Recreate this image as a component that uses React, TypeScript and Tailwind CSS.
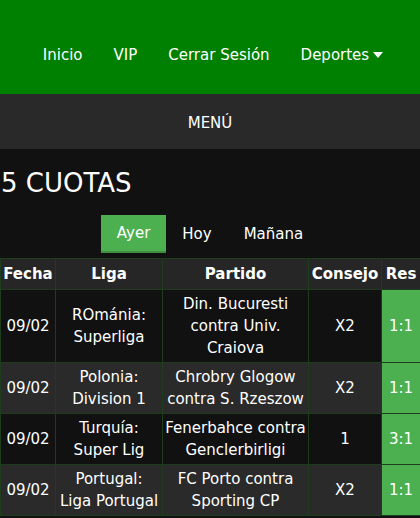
import React, { FC } from "react";

const rows = [
  { fecha: "09/02", liga: ["ROmánia:", "Superliga"], partido: ["Din. Bucuresti", "contra Univ.", "Craiova"], consejo: "X2", res: "1:1" },
  { fecha: "09/02", liga: ["Polonia:", "Division 1"], partido: ["Chrobry Glogow", "contra S. Rzeszow"], consejo: "X2", res: "1:1" },
  { fecha: "09/02", liga: ["Turquía:", "Super Lig"], partido: ["Fenerbahce contra", "Genclerbirligi"], consejo: "1", res: "3:1" },
  { fecha: "09/02", liga: ["Portugal:", "Liga Portugal"], partido: ["FC Porto contra", "Sporting CP"], consejo: "X2", res: "1:1" },
];

const Lines: FC<{ lines: string[] }> = ({ lines }) => (
  <>
    {lines.map((l, i) => (
      <span key={i} className="block whitespace-nowrap">
        {l}
      </span>
    ))}
  </>
);

const App: FC = () => {
  return (
    <div className="min-h-[518px] bg-[#111111] text-white font-['DejaVu_Sans',sans-serif] overflow-hidden">
      <nav className="h-[94px] bg-[#008000] flex items-center justify-center gap-[31px] text-[15px] pt-[16px] pl-[6px]">
        <span>Inicio</span>
        <span>VIP</span>
        <span>Cerrar Sesión</span>
        <span className="flex items-center gap-[4px]">
          Deportes
          <svg width="10" height="6" viewBox="0 0 10 6">
            <path d="M0 0h10L5 6z" fill="white" />
          </svg>
        </span>
      </nav>
      <div className="h-[55px] bg-[#292929] flex items-center justify-center text-[15px] pt-[3px]">MENÚ</div>
      <h1 className="text-[26px] leading-[34px] pl-[1px] pt-[17px]">5 CUOTAS</h1>
      <div className="flex justify-center items-center mt-[15px] text-[15px]">
        <span className="bg-[#4caf50] px-[16px] h-[38px] flex items-center border-b-2 border-[#3f8f42]">Ayer</span>
        <span className="px-[16px]">Hoy</span>
        <span className="px-[16px]">Mañana</span>
      </div>
      <table className="mt-[5px] w-[420px] table-fixed border-collapse text-[15px] leading-[22px] text-center">
        <colgroup>
          <col className="w-[55px]" />
          <col className="w-[107px]" />
          <col className="w-[146px]" />
          <col className="w-[73px]" />
          <col className="w-[39px]" />
        </colgroup>
        <thead>
          <tr className="bg-[#262626]">
            {["Fecha", "Liga", "Partido", "Consejo", "Res"].map((h) => (
              <th key={h} className="border border-[#1d3d1d] font-bold py-[4px] px-0 whitespace-nowrap">
                {h}
              </th>
            ))}
          </tr>
        </thead>
        <tbody>
          {rows.map((r, i) => (
            <tr key={i} className={i % 2 === 0 ? "bg-[#111111]" : "bg-[#2a2a2a]"}>
              <td className="border border-[#1d3d1d] py-[3px]">{r.fecha}</td>
              <td className="border border-[#1d3d1d] py-[3px]">
                <Lines lines={r.liga} />
              </td>
              <td className="border border-[#1d3d1d] py-[3px]">
                <Lines lines={r.partido} />
              </td>
              <td className="border border-[#1d3d1d] py-[3px]">{r.consejo}</td>
              <td className="border border-[#1d3d1d] py-[3px] bg-[#4caf50]">{r.res}</td>
            </tr>
          ))}
        </tbody>
      </table>
    </div>
  );
};

export default App;
